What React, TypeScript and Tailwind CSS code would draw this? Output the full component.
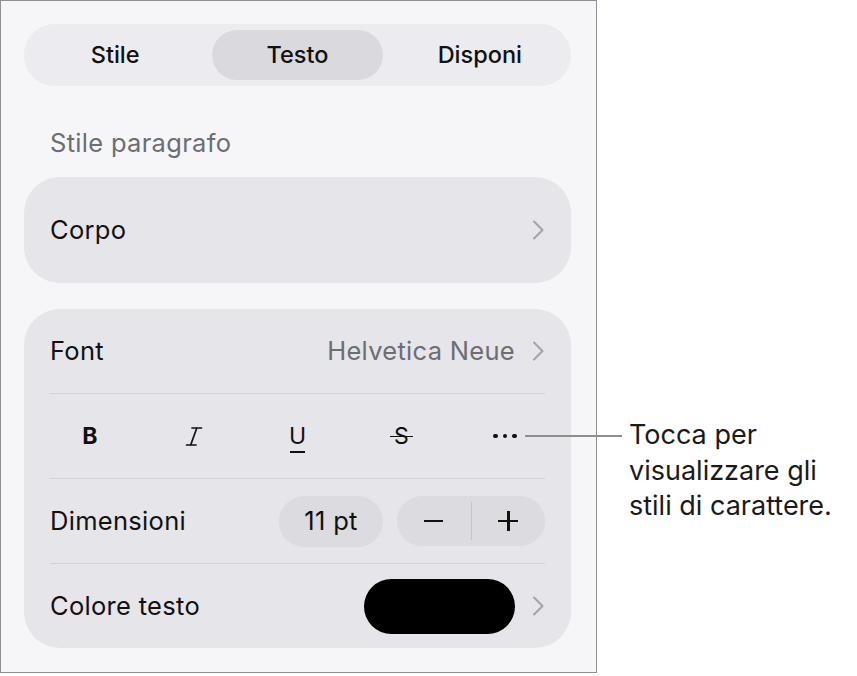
import React from "react";

const font = { fontFamily: "Inter, 'Noto Sans', sans-serif" };

function Chevron() {
  return (
    <svg width="14" height="22" viewBox="0 0 14 22" className="shrink-0">
      <path d="M3 2.5 L11.5 11 L3 19.5" fill="none" stroke="#a2a2a7" strokeWidth="2" strokeLinecap="round" strokeLinejoin="round" />
    </svg>
  );
}

function Divider() {
  return <div className="mx-[26px] h-px bg-[#d3d3d8]" />;
}

export default function App() {
  return (
    <div className="relative flex min-h-[676px] w-[857px] bg-white text-[#111]" style={font}>
      {/* Format panel */}
      <div className="flex h-[673px] w-[597px] shrink-0 flex-col border border-[#8f8f94] bg-[#f6f6f9] pl-[23px] pr-[25px] pt-[23px]">
        {/* Segmented tabs */}
        <div className="grid h-[62px] grid-cols-3 gap-[12px] rounded-full bg-[#ececf0] p-[6px]">
          {["Stile", "Testo", "Disponi"].map((t) => (
            <div
              key={t}
              className={`flex items-center justify-center rounded-full text-[23.5px] font-medium ${
                t === "Testo" ? "bg-[#d9d9de]" : ""
              }`}
            >
              {t}
            </div>
          ))}
        </div>

        <div className="mt-[42px] mb-[19px] h-[30px] pl-[26px] text-[25.5px] leading-[30px] tracking-[0.3px] text-[#6d6d72]">
          Stile paragrafo
        </div>

        {/* Paragraph style */}
        <div className="flex h-[106px] items-center justify-between rounded-[36px] bg-[#e6e5ea] pl-[26px] pr-[26px]">
          <span className="text-[25.5px] tracking-[0.3px]">Corpo</span>
          <Chevron />
        </div>

        {/* Character options */}
        <div className="mt-[26px] flex h-[339px] flex-col rounded-[36px] bg-[#e6e5ea] text-[25.5px] tracking-[0.3px]">
          <div className="flex h-[84px] items-center justify-between px-[26px]">
            <span>Font</span>
            <div className="flex items-center gap-[16px]">
              <span className="text-[#6d6d72]">Helvetica Neue</span>
              <Chevron />
            </div>
          </div>
          <Divider />
          <div className="grid h-[84px] grid-cols-5 items-center px-[14px] tracking-normal">
            <div className="flex justify-center text-[23px] font-bold">B</div>
            <div className="flex justify-center">
              <svg width="18" height="21" viewBox="0 0 18 21">
                <path d="M7 2 H16.5 M1.5 19 H11 M11.8 2 L5.7 19" fill="none" stroke="#111" strokeWidth="1.7" strokeLinecap="round" />
              </svg>
            </div>
            <div className="flex justify-center">
              <span className="relative text-[23px] leading-none">
                U
                <span className="absolute left-[1px] right-[1px] top-[26px] h-[2px] bg-[#111]" />
              </span>
            </div>
            <div className="flex justify-center">
              <span className="relative text-[23px] leading-none">
                S
                <span className="absolute left-[-4px] right-[-4px] top-[11px] h-[1.7px] bg-[#111]" />
              </span>
            </div>
            <div className="flex justify-center gap-[5px]">
              <span className="h-[4.5px] w-[4.5px] rounded-full bg-[#111]" />
              <span className="h-[4.5px] w-[4.5px] rounded-full bg-[#111]" />
              <span className="h-[4.5px] w-[4.5px] rounded-full bg-[#111]" />
            </div>
          </div>
          <Divider />
          <div className="flex h-[84px] items-center justify-between px-[26px]">
            <span>Dimensioni</span>
            <div className="flex items-center gap-[14px]">
              <div className="flex h-[51px] w-[104px] items-center justify-center rounded-full bg-[#dcdbe0]">
                11 pt
              </div>
              <div className="flex h-[50px] w-[148px] items-center rounded-full bg-[#dcdbe0]">
                <div className="flex flex-1 items-center justify-center">
                  <span className="h-[2.5px] w-[19px] bg-[#111]" />
                </div>
                <span className="h-[38px] w-px bg-[#c4c4c9]" />
                <div className="relative flex flex-1 items-center justify-center">
                  <span className="h-[2.5px] w-[20px] bg-[#111]" />
                  <span className="absolute h-[20px] w-[2.5px] bg-[#111]" />
                </div>
              </div>
            </div>
          </div>
          <Divider />
          <div className="flex h-[84px] items-center justify-between px-[26px]">
            <span>Colore testo</span>
            <div className="flex items-center gap-[16px]">
              <div className="h-[55px] w-[151px] rounded-full bg-black" />
              <Chevron />
            </div>
          </div>
        </div>
      </div>

      {/* Callout */}
      <div className="absolute left-[525px] top-[435px] h-[2px] w-[97px] bg-[#8e8e8e]" />
      <div className="pl-[32px] pt-[417px] text-[27px] leading-[35.5px] text-[#1a1a1a]">
        Tocca per
        <br />
        visualizzare gli
        <br />
        stili di carattere.
      </div>
    </div>
  );
}
